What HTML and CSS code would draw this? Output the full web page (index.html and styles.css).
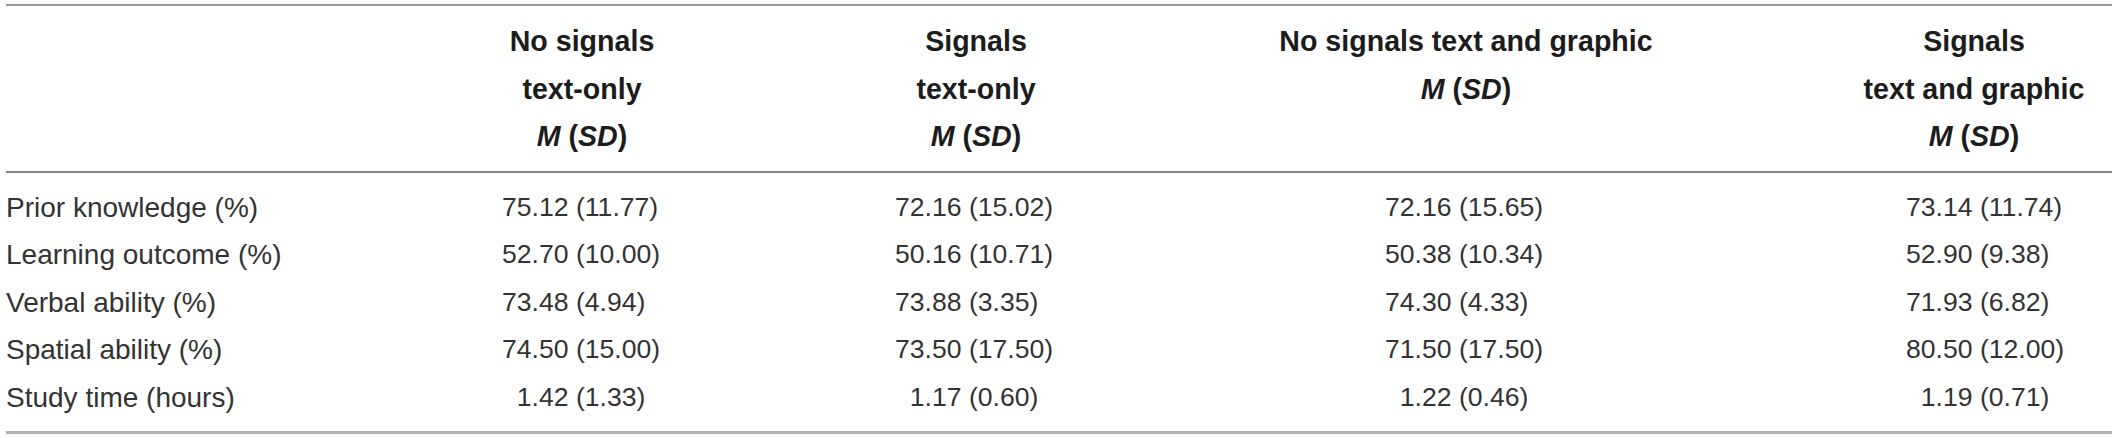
FILE: index.html
```html
<!DOCTYPE html>
<html lang="en">
<head>
<meta charset="utf-8">
<title>Descriptive statistics</title>
<link rel="stylesheet" href="styles.css">
</head>
<body>
<table class="stats">
  <colgroup>
    <col class="w-label">
    <col class="w-c1">
    <col class="w-c2">
    <col class="w-c3">
    <col class="w-c4">
  </colgroup>
  <thead>
    <tr>
      <th class="h-label"></th>
      <th class="h c1">No signals<br>text-only<br><i>M</i> (<i>SD</i>)</th>
      <th class="h c2">Signals<br>text-only<br><i>M</i> (<i>SD</i>)</th>
      <th class="h c3">No signals text and graphic<br><i>M</i> (<i>SD</i>)</th>
      <th class="h c4">Signals<br>text and graphic<br><i>M</i> (<i>SD</i>)</th>
    </tr>
  </thead>
  <tbody>
    <tr class="first">
      <td class="label">Prior knowledge (%)</td>
      <td class="d c1">75.12 (11.77)</td>
      <td class="d c2">72.16 (15.02)</td>
      <td class="d c3">72.16 (15.65)</td>
      <td class="d c4">73.14 (11.74)</td>
    </tr>
    <tr>
      <td class="label">Learning outcome (%)</td>
      <td class="d c1">52.70 (10.00)</td>
      <td class="d c2">50.16 (10.71)</td>
      <td class="d c3">50.38 (10.34)</td>
      <td class="d c4">52.90 (9.38)</td>
    </tr>
    <tr>
      <td class="label">Verbal ability (%)</td>
      <td class="d c1">73.48 (4.94)</td>
      <td class="d c2">73.88 (3.35)</td>
      <td class="d c3">74.30 (4.33)</td>
      <td class="d c4">71.93 (6.82)</td>
    </tr>
    <tr>
      <td class="label">Spatial ability (%)</td>
      <td class="d c1">74.50 (15.00)</td>
      <td class="d c2">73.50 (17.50)</td>
      <td class="d c3">71.50 (17.50)</td>
      <td class="d c4">80.50 (12.00)</td>
    </tr>
    <tr class="last">
      <td class="label">Study time (hours)</td>
      <td class="d c1 ind">1.42 (1.33)</td>
      <td class="d c2 ind">1.17 (0.60)</td>
      <td class="d c3 ind">1.22 (0.46)</td>
      <td class="d c4 ind">1.19 (0.71)</td>
    </tr>
  </tbody>
</table>
</body>
</html>
```

FILE: styles.css
```css
html, body {
  margin: 0;
  padding: 0;
  background: #ffffff;
}

body {
  font-family: "Liberation Sans", Arial, Helvetica, sans-serif;
  color: #333333;
}

.stats {
  table-layout: fixed;
  width: 2106px;
  margin: 4px 0 0 6px;
  border-collapse: separate;
  border-spacing: 0;
  border-top: 2px solid #9a9a9a;
  border-bottom: 3px solid #b4b4b4;
}

.w-label { width: 384px; }
.w-c1 { width: 384px; }
.w-c2 { width: 404px; }
.w-c3 { width: 576px; }
.w-c4 { width: 358px; }

.stats th,
.stats td {
  padding: 0;
}

.stats thead th {
  border-bottom: 2px solid #858585;
  padding-top: 12px;
  padding-bottom: 10px;
  vertical-align: top;
}

.h {
  font-size: 28.6px;
  font-weight: 700;
  line-height: 47.5px;
  color: #1c1c1c;
  text-align: center;
}

.h.c4 {
  padding-left: 82px;
}

.h i {
  font-style: italic;
}

.stats td {
  height: 47.5px;
  line-height: 47.5px;
  vertical-align: middle;
  white-space: nowrap;
}

.stats tr.first td {
  padding-top: 11px;
}

.stats tr.last td {
  padding-bottom: 10px;
}

.label {
  font-size: 28px;
  text-align: left;
}

.d {
  font-size: 26.6px;
  text-align: left;
}

.d.c1 { padding-left: 112px; }
.d.c2 { padding-left: 121px; }
.d.c3 { padding-left: 207px; }
.d.c4 { padding-left: 152px; }

.d.c1.ind { padding-left: calc(112px + 0.556em); }
.d.c2.ind { padding-left: calc(121px + 0.556em); }
.d.c3.ind { padding-left: calc(207px + 0.556em); }
.d.c4.ind { padding-left: calc(152px + 0.556em); }
```
